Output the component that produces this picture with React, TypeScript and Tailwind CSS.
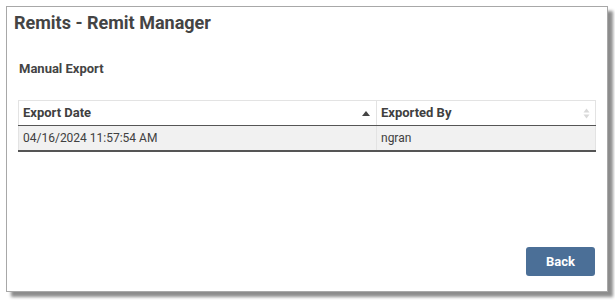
const rows = [{ date: '04/16/2024 11:57:54 AM', by: 'ngran' }];

const SortBoth = () => (
   <svg width="7" height="11" viewBox="0 0 7 11" className="shrink-0">
      <path d="M3.5 0.5 L6.5 4.5 L0.5 4.5 Z" fill="#d9d9d9" />
      <path d="M3.5 10.5 L6.5 6.5 L0.5 6.5 Z" fill="#d9d9d9" />
   </svg>
);

const SortAsc = () => (
   <svg width="8" height="5" viewBox="0 0 8 5" className="shrink-0">
      <path d="M4 0 L8 5 L0 5 Z" fill="#444" />
   </svg>
);

const App = () => {
   return (
      <div className="h-[300px] w-[615px] bg-white pl-[6px] pt-[6px] font-['Roboto',sans-serif] text-[#404040]">
         <div className="flex h-[286px] w-[602px] flex-col border border-[#a8a8a8] bg-white shadow-[5px_5px_3px_rgba(0,0,0,0.45)]">
            <h1 className="pl-[7px] pt-[4px] text-[18px] leading-[24px] font-bold text-[#444]">
               Remits - Remit Manager
            </h1>
            <h2 className="pl-[12px] pt-[26px] text-[13px] leading-[16px] font-bold text-[#444]">
               Manual Export
            </h2>
            <div className="mt-[23px] ml-[11px] w-[578px] text-[12px]">
               <div className="flex h-[25px] border-t border-r border-l border-[#e3e3e3]">
                  <div className="flex flex-1 items-center justify-between border-r border-[#e3e3e3] pr-[6px] pl-[4px] text-[13px] font-bold">
                     <span>Export Date</span>
                     <SortAsc />
                  </div>
                  <div className="flex w-[218px] items-center justify-between pr-[5px] pl-[4px] text-[13px] font-bold">
                     <span>Exported By</span>
                     <SortBoth />
                  </div>
               </div>
               <div className="h-px bg-[#555]" />
               {rows.map(r => (
                  <div key={r.date} className="flex h-[24px] border-r border-l border-[#e3e3e3] bg-[#f1f1f1]">
                     <div className="flex flex-1 items-center border-r border-[#e3e3e3] pl-[4px]">{r.date}</div>
                     <div className="flex w-[218px] items-center pl-[4px]">{r.by}</div>
                  </div>
               ))}
               <div className="h-[2px] bg-[#555]" />
            </div>
            <div className="mt-auto flex justify-end pr-[12px] pb-[15px]">
               <button className="h-[29px] w-[69px] rounded-[3px] bg-[#4b6f97] text-[13px] font-bold text-white">
                  Back
               </button>
            </div>
         </div>
      </div>
   );
};

export default App;
